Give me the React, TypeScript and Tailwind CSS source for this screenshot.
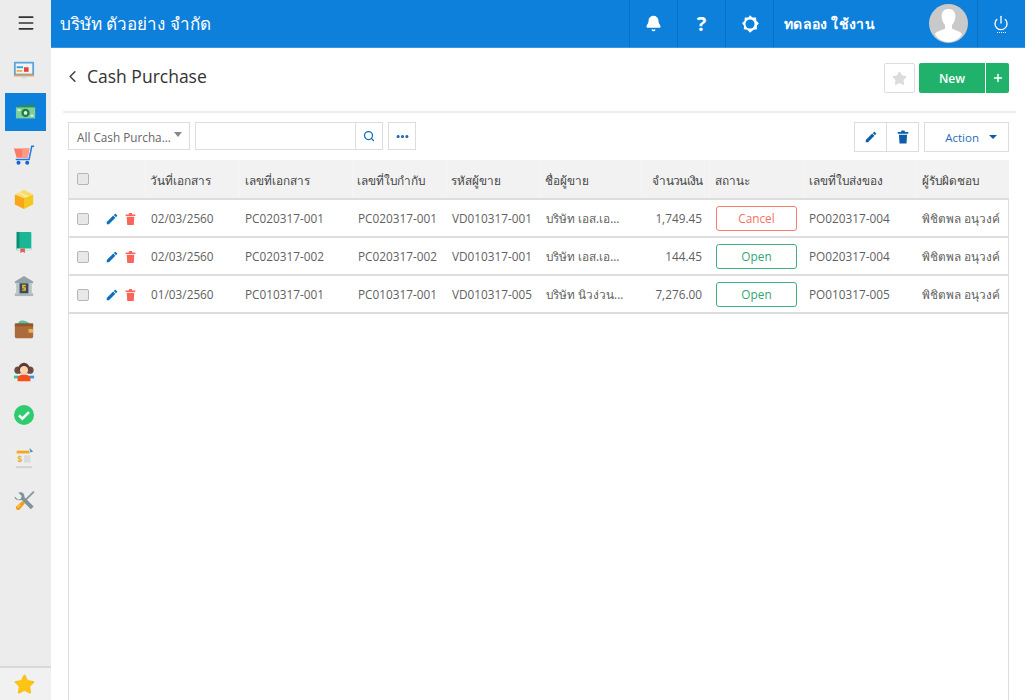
import { Bell, ChevronLeft, Ellipsis, Menu, Plus, Power, Search, Star } from "lucide-react";

const rows = [
  { date: "02/03/2560", doc: "PC020317-001", ref: "PC020317-001", code: "VD010317-001", vendor: "บริษัท เอส.เอ...", amount: "1,749.45", status: "Cancel", po: "PO020317-004" },
  { date: "02/03/2560", doc: "PC020317-002", ref: "PC020317-002", code: "VD010317-001", vendor: "บริษัท เอส.เอ...", amount: "144.45", status: "Open", po: "PO020317-004" },
  { date: "01/03/2560", doc: "PC010317-001", ref: "PC010317-001", code: "VD010317-005", vendor: "บริษัท นิวง่วน...", amount: "7,276.00", status: "Open", po: "PO010317-005" },
];

const heads = ["วันที่เอกสาร", "เลขที่เอกสาร", "เลขที่ใบกำกับ", "รหัสผู้ขาย", "ชื่อผู้ขาย", "จำนวนเงิน", "สถานะ", "เลขที่ใบส่งของ", "ผู้รับผิดชอบ"];

function SolidPencil({ className }: { className?: string }) {
  return (
    <svg viewBox="0 0 24 24" className={className} fill="currentColor">
      <path d="M3 17.25V21h3.75L17.8 9.94l-3.75-3.75L3 17.25zM20.7 7.04a1 1 0 0 0 0-1.41l-2.34-2.34a1 1 0 0 0-1.41 0l-1.83 1.83 3.75 3.75 1.83-1.83z" />
    </svg>
  );
}

function SolidTrash({ className }: { className?: string }) {
  return (
    <svg viewBox="0 0 24 24" className={className} fill="currentColor">
      <path d="M5 8h14l-1 15H6L5 8zM3 3.500h5.500L9.500 1h5l1 2.500H21V6.500H3z" />
    </svg>
  );
}

function Gear() {
  return (
    <svg viewBox="0 0 24 24" className="w-5 h-5" fill="none">
      <path d="M12 1.500l3 2.700 4.200-.1.4 4 3 2.900-2.400 3.200.2 4.100-4.100.5L12 22.500l-3.300-3.700-4.100-.5.2-4.100L2.400 11l3-2.900.4-4 4.200.1z" fill="#fff" />
      <circle cx="12" cy="12" r="5.500" fill="#0d80db" />
    </svg>
  );
}

function Avatar() {
  return (
    <svg viewBox="0 0 40 40" className="w-[39px] h-[39px]">
      <circle cx="20" cy="20" r="20" fill="#c9c9c9" />
      <path d="M20 5c-5 0-7.500 3.500-7 8.500.3 3 1.500 6 3.500 8v3.500c-3 2-9 2.500-10.500 6 3 5 8 8 14 8s11-3 14-8c-1.500-3.500-7.500-4-10.500-6v-3.500c2-2 3.200-5 3.500-8 .5-5-2-8.500-7-8.500z" fill="#fff" />
    </svg>
  );
}

// sidebar icons, small flat drawings
function IconScreen() {
  return (
    <svg viewBox="0 0 24 24" className="w-[22px] h-[22px]">
      <rect x="1" y="3" width="22" height="15" rx="1" fill="#5ba7dc" />
      <rect x="3" y="5" width="18" height="11" fill="#eef3f6" />
      <rect x="4" y="8" width="7" height="2" fill="#3e9dd9" />
      <rect x="4" y="12" width="6" height="2" fill="#f5b142" />
      <rect x="12" y="9" width="5" height="5" fill="#ea4335" />
      <rect x="1" y="17" width="22" height="2" fill="#f39c4a" />
      <rect x="9" y="19" width="6" height="2" fill="#bfe0f2" />
    </svg>
  );
}

function IconMoney() {
  return (
    <svg viewBox="0 0 24 24" className="w-[22px] h-[22px]">
      <path d="M4 5l17-1 1 11H4z" fill="#2e8b57" />
      <rect x="1" y="7" width="21" height="12" fill="#7ed09a" />
      <circle cx="11.500" cy="13" r="4.500" fill="#1f7a4a" />
      <circle cx="11.500" cy="13" r="2" fill="#dff5e6" />
      <rect x="3" y="9" width="3" height="2" fill="#dff5e6" />
      <rect x="17" y="15" width="3" height="2" fill="#dff5e6" />
    </svg>
  );
}

function IconCart() {
  return (
    <svg viewBox="0 0 24 24" className="w-[22px] h-[22px]">
      <path d="M1 5h17l-2 10H4z" fill="#ff7b63" />
      <path d="M10 5h8l-2 10h-6z" fill="#fd9a85" />
      <path d="M3 17h14.500L20.500 2.500H23" fill="none" stroke="#1e78e0" strokeWidth="1.600" />
      <circle cx="6" cy="20.500" r="2.200" fill="#1565d8" />
      <circle cx="15.500" cy="20.500" r="2.200" fill="#1565d8" />
    </svg>
  );
}

function IconBox() {
  return (
    <svg viewBox="0 0 24 24" className="w-[22px] h-[22px]">
      <path d="M12 11v12L2 18V7z" fill="#f8a71c" />
      <path d="M12 11v12l10-5V7z" fill="#f4c81f" />
      <path d="M2 7l10-5 10 5-10 4z" fill="#fbdc63" />
      <path d="M7 4.500l10 4.500-2 1-10-4.500z" fill="#f8ebb0" />
    </svg>
  );
}

function IconBook() {
  return (
    <svg viewBox="0 0 24 24" className="w-[22px] h-[22px]">
      <rect x="4" y="1" width="16" height="20" rx="1" fill="#19b795" />
      <rect x="4" y="1" width="3" height="20" fill="#0f8d73" />
      <rect x="4" y="19" width="16" height="2.500" fill="#d6efe9" />
      <path d="M8 19h5v5l-2.500-1.500L8 24z" fill="#e85a50" />
    </svg>
  );
}

function IconBank() {
  return (
    <svg viewBox="0 0 24 24" className="w-[22px] h-[22px]">
      <path d="M12 1L2 7v2h20V7z" fill="#93a3a8" />
      <rect x="2" y="20" width="20" height="3" fill="#a9b8bc" />
      <rect x="3.500" y="9" width="3" height="11" fill="#b5c3c6" />
      <rect x="17.500" y="9" width="3" height="11" fill="#b5c3c6" />
      <rect x="7" y="9" width="10" height="11" fill="#3e4a55" />
      <path d="M14 11.500h-3.200v2.500h2.400v2.500H10" fill="none" stroke="#f4c430" strokeWidth="1.500" />
    </svg>
  );
}

function IconWallet() {
  return (
    <svg viewBox="0 0 24 24" className="w-[22px] h-[22px]">
      <path d="M5 7c1-4 4-5 7-4s5 1 7 4z" fill="#4cc3a5" />
      <rect x="2" y="6" width="20" height="16" rx="1.500" fill="#ad6b3c" />
      <rect x="2" y="6" width="20" height="3" fill="#92562c" />
      <rect x="17" y="12" width="5" height="4" fill="#e6b24f" />
    </svg>
  );
}

function IconPeople() {
  return (
    <svg viewBox="0 0 24 24" className="w-[22px] h-[22px]">
      <circle cx="5.500" cy="10" r="4" fill="#6a4c45" />
      <circle cx="18.500" cy="10" r="4" fill="#6a4c45" />
      <circle cx="12" cy="8" r="6" fill="#5b3a33" />
      <circle cx="12" cy="10" r="4.500" fill="#ffd3ac" />
      <path d="M1 16h5v3H1z" fill="#27cf93" />
      <path d="M18 16h5v3h-5z" fill="#2a9cf0" />
      <path d="M5 22v-5l4-2h6l4 2v5z" fill="#f4511e" />
    </svg>
  );
}

function IconCheck() {
  return (
    <svg viewBox="0 0 24 24" className="w-[20px] h-[20px]">
      <circle cx="12" cy="12" r="12" fill="#2ecc71" />
      <path d="M6 12.500l4 4 8-8" fill="none" stroke="#fff" strokeWidth="3" />
    </svg>
  );
}

function IconInvoice() {
  return (
    <svg viewBox="0 0 24 24" className="w-[22px] h-[22px]">
      <rect x="3" y="3" width="18" height="20" fill="#eceded" />
      <rect x="3" y="21" width="18" height="2" fill="#cfd2d2" />
      <rect x="4" y="4" width="14" height="3" fill="#f5a623" />
      <path d="M18 1l4 4-3 1z" fill="#3498db" />
      <text x="5" y="16" fontSize="9" fontWeight="700" fill="#e9a825" fontFamily="Liberation Sans, sans-serif">$</text>
      <rect x="12" y="9" width="7" height="8" fill="#dadcdc" />
    </svg>
  );
}

function IconTools() {
  return (
    <svg viewBox="0 0 24 24" className="w-[22px] h-[22px]">
      <path d="M2 7l3.500 3.500 3-1 1-3L6 3c3-1.500 7 .5 6.500 5l10 10-3 3-10-10C5 11.500 1 10 2 7z" fill="#7f9297" />
      <path d="M22 1l1.500 1.500-9 9-1.500-1.500z" fill="#88999e" />
      <path d="M10.500 12l2.500 2.500-6 7c-2 1.500-5-1.500-3.500-3.500z" fill="#f59a1e" />
      <path d="M7 15l2 2-3 3-2-2z" fill="#fbc02d" />
    </svg>
  );
}

const sideIcons = [
  { el: <IconCart />, h: "h-[44px]" },
  { el: <IconBox />, h: "h-[43px]" },
  { el: <IconBook />, h: "h-[44px]" },
  { el: <IconBank />, h: "h-[43px]" },
  { el: <IconWallet />, h: "h-[43px]" },
  { el: <IconPeople />, h: "h-[43px]" },
  { el: <IconCheck />, h: "h-[43px]" },
  { el: <IconInvoice />, h: "h-[43px]" },
  { el: <IconTools />, h: "h-[43px]" },
];

function Check() {
  return <span className="block w-[12px] h-[12px] rounded-[2px] border border-[#b5b5b5] bg-[#e8e8e8]" />;
}

export default function App() {
  return (
    <div className="flex h-[700px] w-[1025px] overflow-hidden bg-white text-[#5f5f5f] font-['Open_Sans','Noto_Sans',sans-serif]">
      {/* Sidebar */}
      <aside className="w-[51px] shrink-0 flex flex-col bg-[#ececec]">
        <div className="h-[45px] flex items-center justify-center text-[#333]">
          <Menu className="w-[20px] h-[20px]" strokeWidth={2} />
        </div>
        <div className="flex-1 flex flex-col">
          <div className="h-[48px] flex items-center justify-center pr-[3px] pt-[1px]">
            <IconScreen />
          </div>
          <div className="h-[38px] mx-[5px] flex items-center justify-center bg-[#0d80db]">
            <IconMoney />
          </div>
          <div className="h-[2px]" />
          {sideIcons.map((s, i) => (
            <div key={i} className={`${s.h} flex items-center justify-center pr-[3px]`}>
              {s.el}
            </div>
          ))}
        </div>
        <div className="h-[34px] border-t-2 border-[#d8d8d8] bg-[#f1f1f1] flex items-center justify-center pr-[3px]">
          <Star className="w-[23px] h-[23px] text-[#fdb913]" fill="#fdc513" strokeWidth={1} />
        </div>
      </aside>

      <div className="flex-1 min-w-0 flex flex-col">
        {/* Top bar */}
        <header className="h-[48px] shrink-0 flex items-stretch bg-[#0d80db] text-white border-b border-[#3a97e0]">
          <div className="flex-1 pl-[9px] flex items-center text-[17px]">บริษัท ตัวอย่าง จำกัด</div>
          <div className="w-[48px] border-l border-[#0b6fbf] flex items-center justify-center">
            <Bell className="w-[17px] h-[17px]" fill="#fff" />
          </div>
          <div className="w-[48px] border-l border-[#0b6fbf] flex items-center justify-center text-[20px] font-bold">?</div>
          <div className="w-[48px] border-l border-[#0b6fbf] flex items-center justify-center">
            <Gear />
          </div>
          <div className="w-[204px] border-l border-[#0b6fbf] flex items-center justify-between pl-[10px] pr-[9px]">
            <span className="text-[14px] font-bold tracking-[0.3px]">ทดลอง ใช้งาน</span>
            <Avatar />
          </div>
          <div className="w-[48px] border-l border-[#0b6fbf] flex flex-col items-center justify-center pr-[1px]">
            <Power className="w-[16px] h-[16px]" strokeWidth={2} />
            <span className="mt-[1px] w-[9px] h-[1px] border-t border-dotted border-white" />
          </div>
        </header>

        <main className="flex-1 min-h-0 flex flex-col pl-[12px] pr-[16px]">
          {/* Title */}
          <div className="h-[65px] shrink-0 flex items-start justify-between border-b-2 border-[#eee] -mr-[7px] pr-[7px]">
            <div className="flex items-center pt-[14px] text-[#333]">
              <ChevronLeft className="w-[19px] h-[19px] text-[#444]" strokeWidth={2} />
              <span className="ml-[5px] text-[17.5px] leading-[28px]">Cash Purchase</span>
            </div>
            <div className="flex items-center pt-[15px]">
              <button className="w-[31px] h-[30px] border border-[#ddd] rounded-[2px] flex items-center justify-center">
                <Star className="w-[15px] h-[15px] text-[#dcdcdc]" fill="#dcdcdc" />
              </button>
              <button className="ml-[4px] w-[66px] h-[30px] pt-[1px] rounded-l-[2px] bg-[#20b26b] text-white text-[12px] font-semibold">New</button>
              <button className="ml-px w-[23px] h-[30px] rounded-r-[2px] bg-[#20b26b] text-white flex items-center justify-center">
                <Plus className="w-[12px] h-[12px]" strokeWidth={3} />
              </button>
            </div>
          </div>

          {/* Toolbar */}
          <div className="h-[47px] shrink-0 flex items-start justify-between pl-[5px] pt-[9px]">
            <div className="flex items-center">
              <div className="w-[122px] h-[28px] border border-[#ddd] flex items-center justify-between pl-[8px] pr-[7px] text-[11.75px] text-[#666]">
                <span className="pt-[3px]">All Cash Purcha...</span>
                <span className="w-0 h-0 border-x-[4px] border-x-transparent border-t-[5px] border-t-[#888] -mt-[3px]" />
              </div>
              <div className="ml-[5px] w-[188px] h-[28px] border border-[#ddd] flex justify-end">
                <div className="w-[27px] border-l border-[#ddd] flex items-center justify-center text-[#0d6fc0]">
                  <Search className="w-[12px] h-[12px]" strokeWidth={2.5} />
                </div>
              </div>
              <div className="ml-[5px] w-[28px] h-[28px] border border-[#ddd] flex items-center justify-center text-[#0d5ea8]">
                <Ellipsis className="w-[15px] h-[15px]" strokeWidth={3} />
              </div>
            </div>
            <div className="flex items-center">
              <div className="w-[33px] h-[30px] border border-[#ddd] flex items-center justify-center text-[#0d5ea8]">
                <SolidPencil className="w-[14px] h-[14px]" />
              </div>
              <div className="w-[32px] h-[30px] border border-l-0 border-[#ddd] flex items-center justify-center text-[#0d5ea8]">
                <SolidTrash className="w-[14px] h-[14px]" />
              </div>
              <div className="ml-[5px] w-[85px] h-[30px] border border-[#ddd] flex items-center justify-end pr-[11px] text-[11.5px] text-[#1f6fb5]">
                <span className="pt-[1px]">Action</span>
                <span className="ml-[10px] w-0 h-0 border-x-[4px] border-x-transparent border-t-[4px] border-t-[#0d5ea8]" />
              </div>
            </div>
          </div>

          {/* Table */}
          <div className="flex-1 min-h-0 ml-[5px] border-x border-[#ddd]">
            <table className="table-fixed w-[940px] border-collapse text-[11.8px]">
              <colgroup>
                <col className="w-[30px]" />
                <col className="w-[46px]" />
                <col className="w-[94px]" />
                <col className="w-[113px]" />
                <col className="w-[94px]" />
                <col className="w-[94px]" />
                <col className="w-[101px]" />
                <col className="w-[68px]" />
                <col className="w-[94px]" />
                <col className="w-[113px]" />
                <col />
              </colgroup>
              <thead>
                <tr className="h-[39px] bg-[#f2f2f2] border-b-2 border-[#ddd] text-[#444]">
                  <th className="pl-[8px] font-normal text-left"><Check /></th>
                  <th className="font-normal" />
                  {heads.map((h, i) => (
                    <th key={h} className={`font-normal whitespace-nowrap pt-[3px] border-l border-[#f5f5f5] ${i === 5 ? "text-right pr-[6px] tracking-[-0.7px]" : i > 5 ? "text-left pl-[5px]" : i === 1 ? "text-left pl-[5px]" : "text-left pl-[4px]"}`}>{h}</th>
                  ))}
                  <th className="font-normal" />
                </tr>
              </thead>
              <tbody>
                {rows.map((r) => (
                  <tr key={r.doc} className="h-[38px] border-b-2 border-[#ddd] [&>td]:pt-[2px]">
                    <td className="pl-[8px]"><Check /></td>
                    <td className="pl-[6px]">
                      <div className="flex items-center gap-[5px]">
                        <SolidPencil className="w-[14px] h-[14px] text-[#0d6fc0]" />
                        <SolidTrash className="w-[13px] h-[14px] text-[#f8665b]" />
                      </div>
                    </td>
                    <td className="pl-[6px] whitespace-nowrap">{r.date}</td>
                    <td className="pl-[6px] whitespace-nowrap">{r.doc}</td>
                    <td className="pl-[6px] whitespace-nowrap">{r.ref}</td>
                    <td className="pl-[6px] whitespace-nowrap">{r.code}</td>
                    <td className="pl-[6px] whitespace-nowrap">{r.vendor}</td>
                    <td className="pr-[7px] text-right whitespace-nowrap">{r.amount}</td>
                    <td className="pl-[7px]">
                      <div className={`w-[81px] h-[25px] mb-[1px] rounded-[3px] border flex items-center justify-center ${r.status === "Cancel" ? "border-[#fb7c6c] text-[#fb6f5e]" : "border-[#3fb07f] text-[#31a873]"}`}>
                        {r.status}
                      </div>
                    </td>
                    <td className="pl-[6px] whitespace-nowrap">{r.po}</td>
                    <td className="pl-[6px] whitespace-nowrap">พิชิตพล อนุวงค์</td>
                    <td />
                  </tr>
                ))}
              </tbody>
            </table>
          </div>
        </main>
      </div>
    </div>
  );
}
